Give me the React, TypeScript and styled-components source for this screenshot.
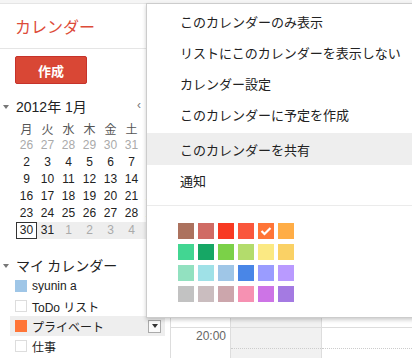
import React from "react";
import styled, { createGlobalStyle } from "styled-components";

const GlobalStyle = createGlobalStyle`
  html, body { margin: 0; padding: 0; background: #fff; overflow: hidden; }
  body {
    font-family: "Liberation Sans", "Noto Sans CJK JP", sans-serif;
    color: #222;
  }
`;

const Page = styled.div`
  position: relative;
  width: 412px;
  height: 358px;
  overflow: hidden;
`;

const TopStripe = styled.div`
  height: 3px;
  background: #f5f5f5;
  border-bottom: 1px solid #e5e5e5;
`;

const Body = styled.div`
  display: flex;
  height: 354px;
`;

const Side = styled.div`
  width: 170px;
  flex-shrink: 0;
  display: flex;
  flex-direction: column;
`;

const Header = styled.div`
  height: 44px;
  border-bottom: 1px solid #e5e5e5;
  display: flex;
  align-items: center;
  padding-left: 15px;
  width: 131px;
`;

const Logo = styled.div`
  font-family: "Noto Sans CJK JP", sans-serif;
  font-size: 16px;
  color: #dd4b39;
`;

const CreateButton = styled.button`
  margin: 7px 0 0 15px;
  width: 72px;
  height: 28px;
  border: 1px solid #c6322a;
  border-radius: 2px;
  background: #d94735;
  color: #fff;
  font-family: "Noto Sans CJK JP", sans-serif;
  font-weight: bold;
  font-size: 13px;
  padding: 0;
  display: flex;
  align-items: center;
  justify-content: center;
`;

const CalHead = styled.div`
  margin-top: 12px;
  height: 20px;
  display: flex;
  align-items: center;
  width: 160px;
`;

const Toggle = styled.span`
  width: 0;
  height: 0;
  border-left: 3.5px solid transparent;
  border-right: 3.5px solid transparent;
  border-top: 4px solid #777;
  margin: 1px 7px 0 3px;
`;

const Month = styled.div`
  font-size: 14px;
  color: #222;
  flex: 1;
`;

const NavArrow = styled.span`
  font-size: 12px;
  color: #777;
  width: 14px;
  text-align: center;
  margin-top: -3px;
`;

const Grid = styled.div`
  margin: 4px 0 0 16px;
  display: grid;
  grid-template-columns: repeat(7, 21px);
`;

const DayName = styled.div`
  height: 17px;
  line-height: 17px;
  text-align: center;
  font-size: 12px;
  color: #555;
  font-family: "Noto Sans CJK JP", sans-serif;
`;

const Day = styled.div<{ $muted?: boolean; $week?: boolean; $today?: boolean }>`
  height: 17px;
  box-sizing: border-box;
  text-align: center;
  font-size: 12px;
  color: ${(p) => (p.$muted ? "#aaa" : "#222")};
  background: ${(p) => (p.$today ? "#fff" : p.$week ? "#eee" : "transparent")};
  border: ${(p) => (p.$today ? "1px solid #333" : "none")};
  line-height: ${(p) => (p.$today ? "15px" : "17px")};
`;

const SectionHead = styled.div`
  margin-top: 15px;
  height: 22px;
  display: flex;
  align-items: center;
  font-family: "Noto Sans CJK JP", sans-serif;
  font-size: 14px;
  color: #222;
`;

const CalRow = styled.div<{ $active?: boolean }>`
  margin-left: 10px;
  width: 150px;
  padding-left: 5px;
  height: 20px;
  display: flex;
  align-items: center;
  background: ${(p) => (p.$active ? "#eee" : "transparent")};
`;

const Swatch = styled.span<{ $color?: string }>`
  width: 12px;
  height: 12px;
  box-sizing: border-box;
  background: ${(p) => p.$color || "#fff"};
  border: ${(p) => (p.$color ? "none" : "1px solid #ddd")};
  margin-right: 5px;
  flex-shrink: 0;
`;

const CalName = styled.span`
  font-size: 12px;
  color: #222;
  flex: 1;
  white-space: nowrap;
`;

const DropBox = styled.span`
  width: 13px;
  height: 13px;
  box-sizing: border-box;
  border: 1px solid #aaa;
  background: #fafafa;
  display: flex;
  align-items: center;
  justify-content: center;
  margin-right: 4px;
  &::after {
    content: "";
    border-left: 3.5px solid transparent;
    border-right: 3.5px solid transparent;
    border-top: 4px solid #333;
  }
`;

const Main = styled.div`
  flex: 1;
  border-left: 1px solid #ddd;
  display: flex;
  flex-direction: column;
`;

const MainTop = styled.div`
  height: 29px;
  flex-shrink: 0;
`;

const HourRow = styled.div`
  display: grid;
  grid-template-columns: 59px 91px 1fr;
  height: 42px;
  flex-shrink: 0;
  border-top: 1px solid #ddd;
  box-sizing: border-box;
`;

const TimeCell = styled.div`
  text-align: right;
  padding: 1px 4px 0 0;
  font-size: 12px;
  color: #666;
`;

const DayCell = styled.div<{ $today?: boolean }>`
  border-left: 1px solid #ddd;
  background: ${(p) => (p.$today ? "#f1f1f1" : "#fff")};
  display: flex;
  flex-direction: column;
`;

const HalfLine = styled.div`
  height: 20px;
  border-bottom: 1px dotted #ccc;
`;

const Menu = styled.div`
  position: absolute;
  left: 146px;
  top: 3px;
  width: 290px;
  height: 315px;
  box-sizing: border-box;
  background: #fff;
  border: 1px solid rgba(0, 0, 0, 0.2);
  box-shadow: 0 2px 4px rgba(0, 0, 0, 0.2);
  padding-top: 2px;
  font-family: "Noto Sans CJK JP", sans-serif;
`;

const MenuItem = styled.div<{ $hover?: boolean; $gap?: boolean }>`
  height: ${(p) => (p.$gap ? "32px" : "31px")};
  margin-top: ${(p) => (p.$gap ? "3px" : "0")};
  display: flex;
  align-items: center;
  padding-left: 33px;
  font-size: 13px;
  color: #222;
  background: ${(p) => (p.$hover ? "#eee" : "transparent")};
`;

const Separator = styled.div`
  margin: 9px 0 0;
  border-top: 1px solid #ebebeb;
`;

const Palette = styled.div`
  margin: 17px 0 0 31px;
  display: grid;
  grid-template-columns: repeat(6, 16px);
  column-gap: 4px;
  row-gap: 5px;
`;

const Chip = styled.div<{ $c: string }>`
  width: 16px;
  height: 16px;
  background: ${(p) => p.$c};
  display: flex;
  align-items: center;
  justify-content: center;
`;

const colors = [
  "#ac725e", "#d06b64", "#f83a22", "#fa573c", "#ff7537", "#ffad46",
  "#42d692", "#16a765", "#7bd148", "#b3dc6c", "#fbe983", "#fad165",
  "#92e1c0", "#9fe1e7", "#9fc6e7", "#4986e7", "#9a9cff", "#b99aff",
  "#c2c2c2", "#cabdbf", "#cca6ac", "#f691b2", "#cd74e6", "#a47ae2",
];

const weeks: { d: number; m?: boolean }[][] = [
  [26, 27, 28, 29, 30, 31, 1].map((d, i) => ({ d, m: i < 6 })),
  [2, 3, 4, 5, 6, 7, 8].map((d) => ({ d })),
  [9, 10, 11, 12, 13, 14, 15].map((d) => ({ d })),
  [16, 17, 18, 19, 20, 21, 22].map((d) => ({ d })),
  [23, 24, 25, 26, 27, 28, 29].map((d) => ({ d })),
  [30, 31, 1, 2, 3, 4, 5].map((d, i) => ({ d, m: i > 1 })),
];

// Rows above 20:00 sit under the open menu; their labels are not shown.
const hours = ["", "", "", "", "", "", "", "20:00"];

const menuItems = [
  "このカレンダーのみ表示",
  "リストにこのカレンダーを表示しない",
  "カレンダー設定",
  "このカレンダーに予定を作成",
  "このカレンダーを共有",
  "通知",
];

export default function App() {
  return (
    <Page>
      <GlobalStyle />
      <TopStripe />
      <Body>
        <Side>
          <Header>
            <Logo>カレンダー</Logo>
          </Header>
          <CreateButton>作成</CreateButton>
          <CalHead>
            <Toggle />
            <Month>2012年 1月</Month>
            <NavArrow>‹</NavArrow>
            <NavArrow>›</NavArrow>
          </CalHead>
          <Grid>
            {["月", "火", "水", "木", "金", "土", "日"].map((n) => (
              <DayName key={n}>{n}</DayName>
            ))}
            {weeks.map((w, wi) =>
              w.map((c, ci) => (
                <Day
                  key={`${wi}-${ci}`}
                  $muted={c.m}
                  $week={wi === 5}
                  $today={wi === 5 && ci === 0}
                >
                  {c.d}
                </Day>
              ))
            )}
          </Grid>
          <SectionHead>
            <Toggle />
            マイ カレンダー
          </SectionHead>
          <CalRow>
            <Swatch $color="#9fc6e7" />
            <CalName>syunin a</CalName>
          </CalRow>
          <CalRow>
            <Swatch />
            <CalName>ToDo リスト</CalName>
          </CalRow>
          <CalRow $active>
            <Swatch $color="#ff7537" />
            <CalName>プライベート</CalName>
            <DropBox />
          </CalRow>
          <CalRow>
            <Swatch />
            <CalName>仕事</CalName>
          </CalRow>
        </Side>
        <Main>
          <MainTop />
          {hours.map((h, i) => (
            <HourRow key={i}>
              <TimeCell>{h}</TimeCell>
              <DayCell $today>
                <HalfLine />
              </DayCell>
              <DayCell>
                <HalfLine />
              </DayCell>
            </HourRow>
          ))}
        </Main>
      </Body>
      <Menu>
        {menuItems.map((m, i) => (
          <MenuItem key={m} $hover={i === 4} $gap={i === 4}>
            {m}
          </MenuItem>
        ))}
        <Separator />
        <Palette>
          {colors.map((c, i) => (
            <Chip key={c} $c={c}>
              {i === 4 && (
                <svg width="12" height="10" viewBox="0 0 12 10">
                  <polyline
                    points="1.5,5 4.5,8 10.5,2"
                    fill="none"
                    stroke="#fff"
                    strokeWidth="2.2"
                  />
                </svg>
              )}
            </Chip>
          ))}
        </Palette>
      </Menu>
    </Page>
  );
}
